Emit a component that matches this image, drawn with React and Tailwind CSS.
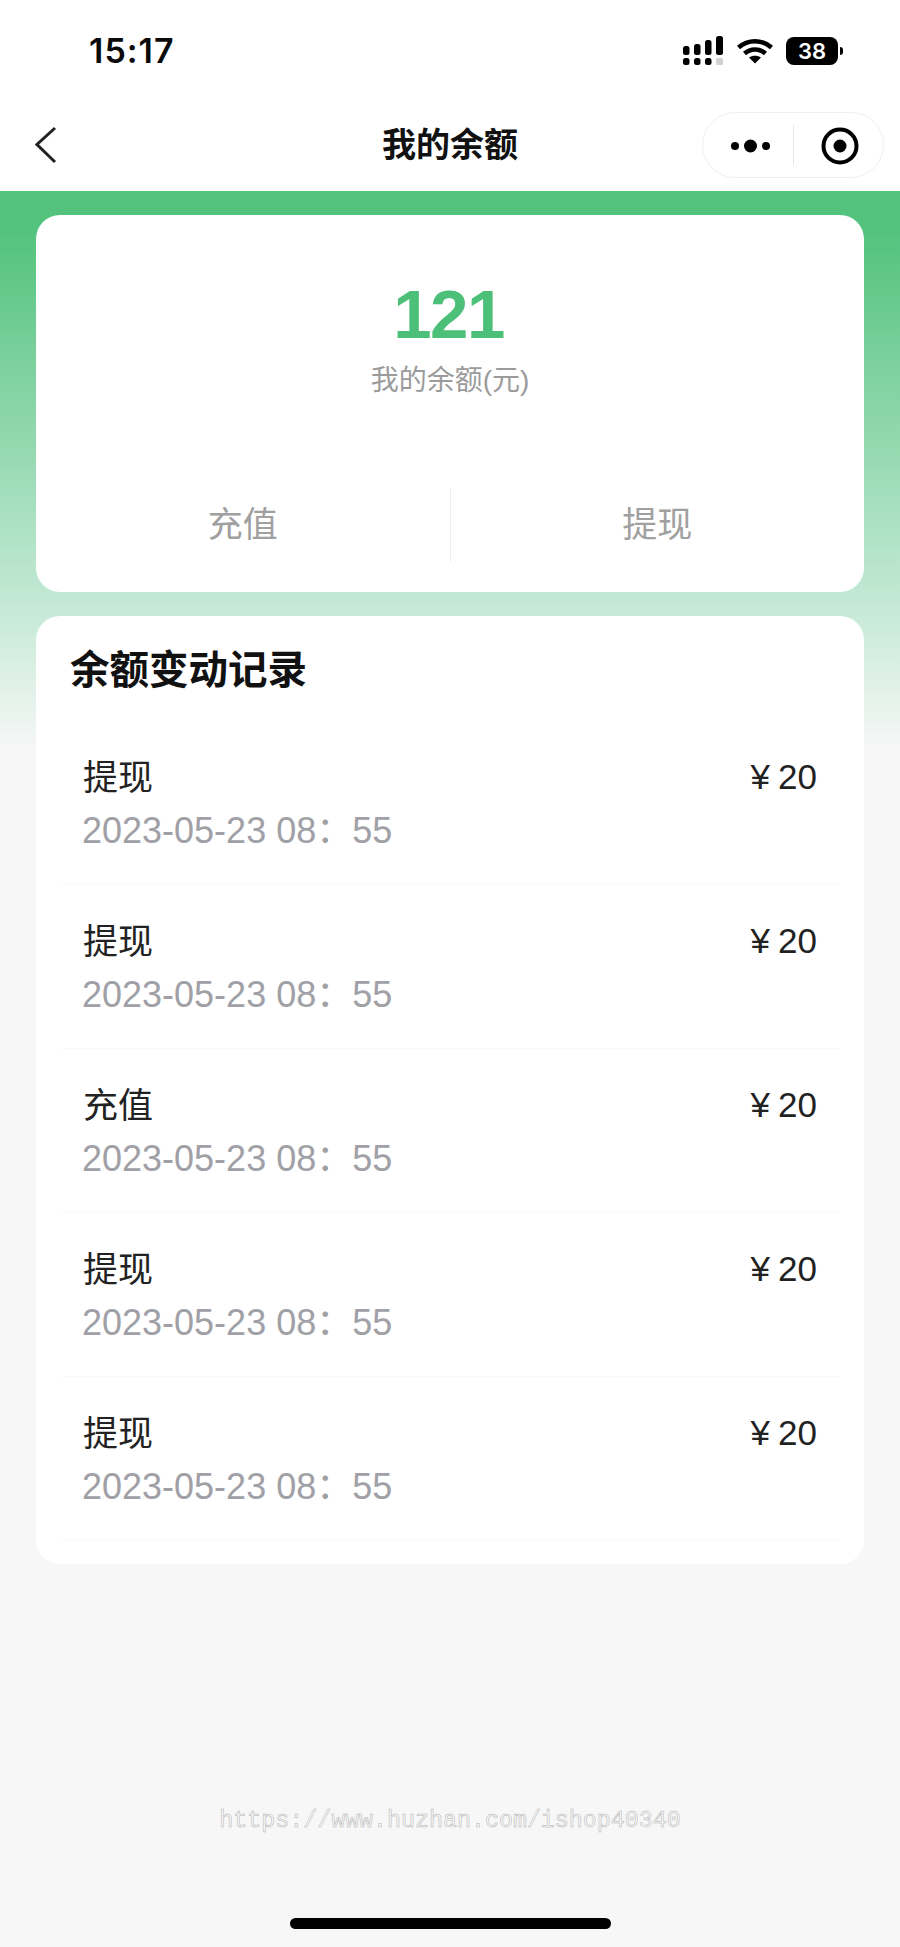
const rows = ['提现', '提现', '充值', '提现', '提现']

function Signal() {
  return (
    <svg width="44" height="30" viewBox="0 0 44 30" fill="#000">
      <rect x="1" y="10" width="6.5" height="9" rx="2.5" />
      <rect x="12" y="8" width="6.5" height="11" rx="2.5" />
      <rect x="23" y="4" width="6.5" height="15" rx="2.5" />
      <rect x="34" y="0" width="7" height="19" rx="2.5" />
      <rect x="1" y="22" width="6.5" height="7" rx="2.5" />
      <rect x="12" y="22" width="6.5" height="7" rx="2.5" />
      <rect x="23" y="22" width="6.5" height="7" rx="2.5" />
      <rect x="34" y="22" width="7" height="7" rx="1.5" fill="#d2d2d2" />
    </svg>
  )
}

function Wifi() {
  return (
    <svg width="36" height="26" viewBox="0 0 36 26" fill="none" stroke="#000" strokeWidth="4.5">
      <path d="M1.5 9.5C11 1 25 1 34.5 9.5" />
      <path d="M7.5 15.5C13.5 10 22.5 10 28.5 15.5" />
      <path d="M18 25.5L12 19.5C15.5 17 20.5 17 24 19.5Z" fill="#000" stroke="none" />
    </svg>
  )
}

function Row({ title }) {
  return (
    <div className="h-[164px] mx-6 pl-[23px] pr-[23px] pt-[34px] border-b border-[#f9f9f9]">
      <div className="flex justify-between items-start">
        <span className="text-[35px] leading-[46px] text-[#222]">{title}</span>
        <span className="text-[35px] leading-[46px] -mt-px text-[#222]"><span className="mr-[8px]">¥</span>20</span>
      </div>
      <div className="text-[36px] leading-[46px] mt-[7px] -ml-px text-[#a0a0a6]">2023-05-23 08：55</div>
    </div>
  )
}

export default function App() {
  return (
    <div className="w-[900px] h-[1947px] bg-[#f7f7f7] flex flex-col overflow-hidden font-['Liberation_Sans','Noto_Sans_CJK_SC',sans-serif]">
      <div className="h-[191px] bg-white shrink-0">
        <div className="h-[100px] pl-[89px] pr-[57px] pt-[29px] flex justify-between items-start">
          <span className="font-['Inter',sans-serif] font-semibold text-[34px] leading-[44px] tracking-[1px] text-[#0a0a0a]">15:17</span>
          <div className="flex items-center pt-[7px]">
            <Signal />
            <div className="ml-[11px]"><Wifi /></div>
            <div className="ml-[13px] w-[52px] h-[28px] rounded-lg bg-black text-white flex items-center justify-center font-['Inter',sans-serif] font-semibold text-[22px] leading-none">38</div>
            <div className="ml-[2px] w-[3px] h-[8px] rounded-r-sm bg-black" />
          </div>
        </div>
        <div className="h-[91px] px-4 grid grid-cols-[1fr_auto_1fr] items-start">
          <div className="pl-5">
            <svg width="24" height="38" viewBox="0 0 24 38" fill="none" stroke="#222" strokeWidth="3" className="mt-[26px] -ml-px">
              <path d="M20 2L2 18.5L20 36" />
            </svg>
          </div>
          <span className="text-[34px] leading-[44px] font-semibold text-[#111] mt-[23px]">我的余额</span>
          <div className="justify-self-end w-[182px] h-[66px] mt-[12px] rounded-[33px] border border-[#f0f0f0] flex items-center">
            <div className="w-[90px] shrink-0 flex justify-center pl-[6px] pt-[1px]">
              <svg width="42" height="16" viewBox="0 0 42 16" fill="#000">
                <circle cx="5" cy="8" r="4" />
                <circle cx="20.5" cy="8" r="6.5" />
                <circle cx="36" cy="8" r="4" />
              </svg>
            </div>
            <div className="w-px h-[40px] bg-[#e6e6e6]" />
            <div className="flex-1 flex justify-center pl-[3px] pt-[1px]">
              <svg width="38" height="38" viewBox="0 0 38 38" fill="none">
                <circle cx="19" cy="19" r="16.5" stroke="#000" strokeWidth="4" />
                <circle cx="19" cy="19" r="6.5" fill="#000" />
              </svg>
            </div>
          </div>
        </div>
      </div>

      <div className="flex-1 px-9 pt-6 bg-no-repeat bg-[length:100%_560px] bg-[linear-gradient(#52c27c,#52c27c_6%,#c6ead7_75%,#f7f7f7)]">
        <div className="h-[377px] rounded-[24px] bg-white flex flex-col items-center">
          <div className="text-[69px] leading-[80px] font-bold text-[#4cbf78] mt-[60px] -ml-[3px] tracking-[-1.5px]">121</div>
          <div className="text-[28px] leading-[36px] text-[#9b9b9b] mt-[8px]">我的余额(元)</div>
          <div className="w-full flex items-center mt-[89px]">
            <div className="flex-1 text-center text-[35px] leading-[46px] text-[#a0a0a0]">充值</div>
            <div className="w-px h-[74px] bg-[#eeeeee]" />
            <div className="flex-1 text-center text-[35px] leading-[46px] text-[#a0a0a0]">提现</div>
          </div>
        </div>

        <div className="h-[948px] mt-6 rounded-[24px] bg-white">
          <div className="h-[105px] pl-[34px] pt-[28px] text-[39.5px] leading-[52px] font-semibold text-[#111]">余额变动记录</div>
          {rows.map((title, i) => (
            <Row key={i} title={title} />
          ))}
        </div>

        <div className="mt-[242px] text-center font-['Liberation_Mono',monospace] text-[23.3px] leading-[30px] text-[#f7f7f7] [-webkit-text-stroke:0.5px_#b0b0b0]">
          https://www.huzhan.com/ishop40340
        </div>
        <div className="w-[321px] h-[11px] mt-[82px] ml-[254px] rounded-full bg-black" />
      </div>
    </div>
  )
}
